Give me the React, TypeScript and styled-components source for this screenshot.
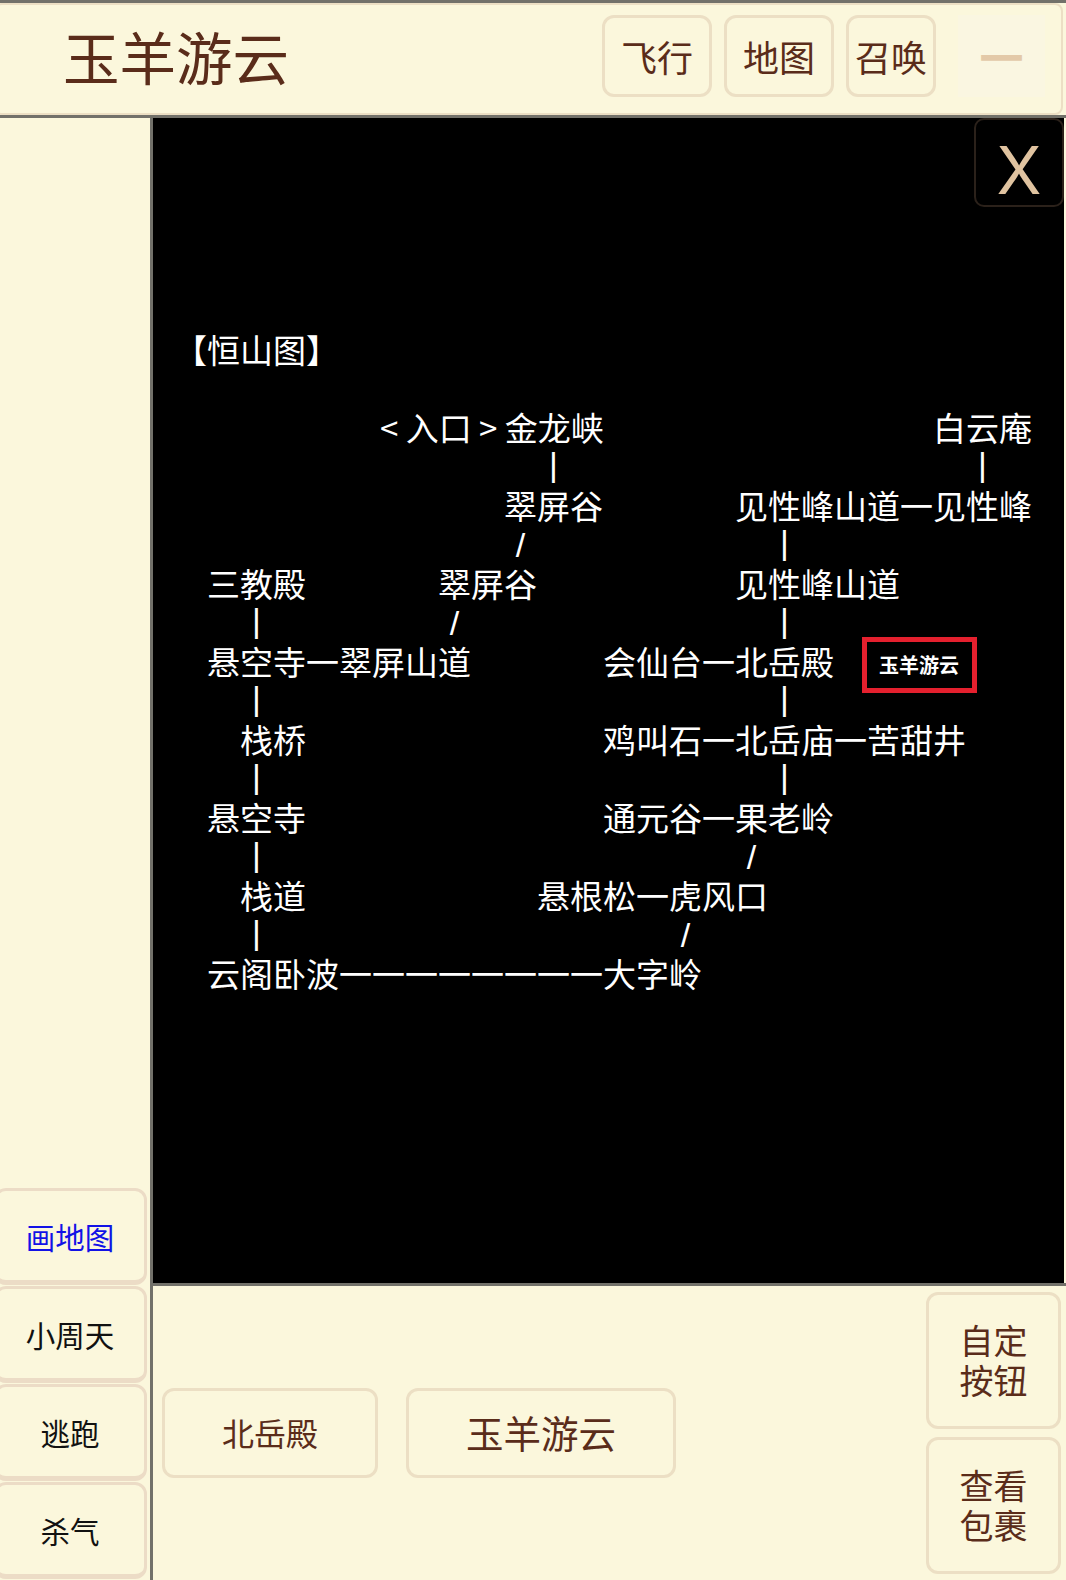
import React from 'react';
import styled, { createGlobalStyle } from 'styled-components';

const CREAM = '#fbf7dc';
const BROWN = '#5a2c1a';
const EDGE = '#ecdfc4';
const RULE = '#72716a';
const FONT = '"Noto Sans CJK SC", "Noto Sans", sans-serif';

const GlobalStyle = createGlobalStyle`
  html, body {
    margin: 0;
    padding: 0;
    background: ${CREAM};
  }
  * {
    box-sizing: border-box;
  }
`;

const Page = styled.div`
  width: 1066px;
  height: 1580px;
  overflow: hidden;
  display: flex;
  flex-direction: column;
  background: ${CREAM};
  border-top: 3px solid ${RULE};
  font-family: ${FONT};
`;

const Header = styled.header`
  flex: none;
  width: 1069px;
  height: 112px;
  margin-left: -6px;
  padding: 8px 16px 14px 67px;
  display: flex;
  align-items: center;
  border: 2px solid ${EDGE};
  border-radius: 8px;
`;

const Title = styled.h1`
  margin: 0 auto 2px 0;
  font-size: 56.5px;
  font-weight: 400;
  line-height: 1;
  color: ${BROWN};
`;

const TopButtons = styled.div`
  display: flex;
  gap: 12px;
`;

const Button = styled.button`
  display: flex;
  align-items: center;
  justify-content: center;
  padding: 0;
  background: ${CREAM};
  border: 3px solid ${EDGE};
  border-radius: 12px;
  color: ${BROWN};
  font-family: ${FONT};
  font-weight: 400;
`;

const TopButton = styled(Button)<{ $width: number }>`
  width: ${props => props.$width}px;
  height: 82px;
  font-size: 36px;
`;

const MinusButton = styled.button`
  width: 87px;
  height: 82px;
  margin-left: 10px;
  padding: 0;
  background: #faf6e1;
  border: none;
  color: #e3c9a8;
  font-family: ${FONT};
  font-size: 44px;
  font-weight: 700;
`;

const Body = styled.div`
  flex: 1;
  min-height: 0;
  display: flex;
  border-top: 3px solid ${RULE};
`;

const Sidebar = styled.nav`
  flex: none;
  width: 153px;
  padding: 0 3px 1px 0;
  display: flex;
  flex-direction: column;
  justify-content: flex-end;
  gap: 1px;
  border-right: 3px solid ${RULE};
`;

const SideButton = styled(Button)<{ $active?: boolean }>`
  width: 153px;
  height: 97px;
  margin-left: -6px;
  padding-right: 1px;
  border-color: #ecdcc6;
  border-bottom-width: 5px;
  font-size: 29.5px;
  color: ${props => (props.$active ? '#1212e6' : '#111')};
`;

const Main = styled.main`
  flex: 1;
  min-width: 0;
  display: flex;
  flex-direction: column;
`;

const MapPane = styled.section`
  position: relative;
  flex: none;
  width: 911px;
  height: 1165px;
  padding: 212px 0 0 21px;
  background: #000;
  color: #fff;
  font-size: 33px;
`;

const CloseButton = styled.button`
  position: absolute;
  top: 0;
  right: 0;
  width: 90px;
  height: 89px;
  padding: 15px 0 0;
  background: #000;
  border: 2px solid #2b211a;
  border-radius: 10px;
  color: #e0c3a0;
  font-family: Inter, sans-serif;
  font-size: 66px;
  font-weight: 400;
  line-height: 1;
`;

const MapRow = styled.div`
  height: 39px;
  display: grid;
  grid-template-columns: repeat(58, 16.5px);
  grid-template-rows: 39px;
  line-height: 39px;
`;

const Place = styled.span<{ $col: number; $nudge?: number }>`
  grid-row: 1;
  grid-column-start: ${props => props.$col + 1};
  margin-left: ${props => props.$nudge ?? 0}px;
  white-space: pre;
`;

const Link = styled.span<{ $col: number }>`
  grid-row: 1;
  grid-column: ${props => props.$col + 1} / span 2;
  text-align: center;
  font-family: "Liberation Sans", sans-serif;
  font-size: 34px;
`;

const Pipe = styled(Link)`
  line-height: 35px;
`;

const Slash = styled(Link)`
  line-height: 41px;
`;

const Badge = styled.span<{ $col: number }>`
  grid-row: 1;
  grid-column-start: ${props => props.$col + 1};
  align-self: center;
  width: 115px;
  height: 56px;
  margin: 6px 0 0 11px;
  display: flex;
  align-items: center;
  justify-content: center;
  border: 5px solid #e5202e;
  font-size: 20px;
  font-weight: 700;
  line-height: 1;
  white-space: nowrap;
`;

const BottomPanel = styled.section`
  flex: 1;
  min-height: 0;
  padding-left: 9px;
  display: flex;
  align-items: center;
  gap: 28px;
  border-top: 3px solid ${RULE};
`;

const ActionButton = styled(Button)<{ $width: number; $size: number }>`
  width: ${props => props.$width}px;
  height: 90px;
  padding-bottom: 3px;
  font-size: ${props => props.$size}px;
`;

const RightColumn = styled.div`
  margin-left: auto;
  padding: 0 5px 0 0;
  display: flex;
  flex-direction: column;
  gap: 8px;
`;

const SquareButton = styled(Button)`
  width: 135px;
  height: 137px;
  padding-bottom: 2px;
  font-size: 34px;
  line-height: 40px;
`;

type Item = { col: number; text: string; nudge?: number };

const rows: { places?: Item[]; pipes?: number[]; slashes?: number[]; badge?: number }[] = [
  { places: [{ col: 0, text: '【恒山图】' }] },
  {},
  { places: [{ col: 12, nudge: 8, text: '< 入口 > 金龙峡' }, { col: 46, text: '白云庵' }] },
  { pipes: [22, 48] },
  { places: [{ col: 20, text: '翠屏谷' }, { col: 34, text: '见性峰山道一见性峰' }] },
  { slashes: [20], pipes: [36] },
  { places: [{ col: 2, text: '三教殿' }, { col: 16, text: '翠屏谷' }, { col: 34, text: '见性峰山道' }] },
  { pipes: [4, 36], slashes: [16] },
  { places: [{ col: 2, text: '悬空寺一翠屏山道' }, { col: 26, text: '会仙台一北岳殿' }], badge: 41 },
  { pipes: [4, 36] },
  { places: [{ col: 4, text: '栈桥' }, { col: 26, text: '鸡叫石一北岳庙一苦甜井' }] },
  { pipes: [4, 36] },
  { places: [{ col: 2, text: '悬空寺' }, { col: 26, text: '通元谷一果老岭' }] },
  { pipes: [4], slashes: [34] },
  { places: [{ col: 4, text: '栈道' }, { col: 22, text: '悬根松一虎风口' }] },
  { pipes: [4], slashes: [30] },
  { places: [{ col: 2, text: '云阁卧波一一一一一一一一大字岭' }] },
];

const sideItems = ['画地图', '小周天', '逃跑', '杀气'];

export default function App() {
  return (
    <Page>
      <GlobalStyle />
      <Header>
        <Title>玉羊游云</Title>
        <TopButtons>
          <TopButton $width={110}>飞行</TopButton>
          <TopButton $width={110}>地图</TopButton>
          <TopButton $width={90}>召唤</TopButton>
          <MinusButton>一</MinusButton>
        </TopButtons>
      </Header>
      <Body>
        <Sidebar>
          {sideItems.map((item, i) => (
            <SideButton key={item} $active={i === 0}>{item}</SideButton>
          ))}
        </Sidebar>
        <Main>
          <MapPane>
            <CloseButton>X</CloseButton>
            {rows.map((row, i) => (
              <MapRow key={i}>
                {row.places?.map(p => (
                  <Place key={p.col} $col={p.col} $nudge={p.nudge}>{p.text}</Place>
                ))}
                {row.pipes?.map(col => <Pipe key={col} $col={col}>|</Pipe>)}
                {row.slashes?.map(col => <Slash key={col} $col={col}>/</Slash>)}
                {row.badge !== undefined && <Badge $col={row.badge}>玉羊游云</Badge>}
              </MapRow>
            ))}
          </MapPane>
          <BottomPanel>
            <ActionButton $width={216} $size={32}>北岳殿</ActionButton>
            <ActionButton $width={270} $size={37.5}>玉羊游云</ActionButton>
            <RightColumn>
              <SquareButton>自定<br />按钮</SquareButton>
              <SquareButton>查看<br />包裹</SquareButton>
            </RightColumn>
          </BottomPanel>
        </Main>
      </Body>
    </Page>
  );
}
